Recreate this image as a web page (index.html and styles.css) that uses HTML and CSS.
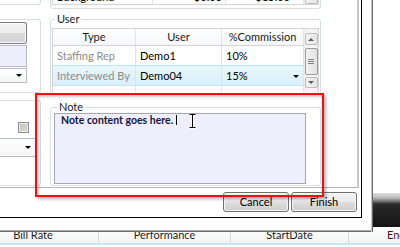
FILE: index.html
```html
<!DOCTYPE html>
<html>
<head>
<meta charset="utf-8">
<link rel="stylesheet" href="styles.css">
</head>
<body>
<div class="screen">
  <div class="app">
    <div class="app-space"></div>
    <div class="app-toolbar"></div>
    <div class="app-header">
      <div class="hcol h1">Bill Rate</div>
      <div class="hcol h2">Performance</div>
      <div class="hcol h3">StartDate</div>
      <div class="hcol h4">EndDate</div>
    </div>
  </div>

  <div class="dialog">
    <div class="client">
      <div class="panel">
        <div class="col-left">
          <fieldset class="grp grp-a"></fieldset>
          <fieldset class="grp grp-b">
            <div class="vbtn"></div>
            <div class="lav-box"></div>
            <div class="combo"><span class="arrow"></span></div>
          </fieldset>
          <fieldset class="grp grp-c">
            <div class="chk-row"><span class="chk"></span></div>
            <div class="combo combo-2"><span class="arrow"></span></div>
          </fieldset>
        </div>
        <div class="col-right">
          <fieldset class="grp grp-bg">
            <div class="grid grid-bg">
              <div class="cells">
                <div class="row bg-row">
                  <div class="c b1">Background</div>
                  <div class="c b2 num">$0.00</div>
                  <div class="c b3 num">$15.00</div>
                </div>
              </div>
              <div class="vscroll vscroll-bg"><div class="sb-btn"><span class="tri-down"></span></div></div>
            </div>
          </fieldset>
          <fieldset class="grp grp-user">
            <legend>User</legend>
            <div class="grid grid-user">
              <div class="cells">
                <div class="row head">
                  <div class="c c1">Type</div>
                  <div class="c c2">User</div>
                  <div class="c c3">%Commission</div>
                </div>
                <div class="row">
                  <div class="c c1 ro">Staffing Rep</div>
                  <div class="c c2">Demo1</div>
                  <div class="c c3">10%</div>
                </div>
                <div class="row sel">
                  <div class="c c1 ro">Interviewed By</div>
                  <div class="c c2">Demo04</div>
                  <div class="c c3 dd-cell">15%<span class="dd"></span></div>
                </div>
                <div class="row">
                  <div class="c c1"></div>
                  <div class="c c2"></div>
                  <div class="c c3"></div>
                </div>
              </div>
              <div class="vscroll">
                <div class="sb-btn up"><span class="tri-up"></span></div>
                <div class="sb-thumb"><span class="grip"></span></div>
                <div class="sb-btn down"><span class="tri-down"></span></div>
              </div>
            </div>
          </fieldset>
          <fieldset class="grp grp-note">
            <legend>Note</legend>
            <div class="note-box">Note content goes here.<span class="caret"></span></div>
          </fieldset>
        </div>
      </div>
      <div class="buttons">
        <button class="btn">Cancel</button>
        <button class="btn">Finish</button>
      </div>
    </div>
  </div>

  <div class="annot"></div>
  <svg class="ibeam" width="7" height="15" viewBox="0 0 7 15">
    <path d="M0.5 0.5H6.5M3.5 0.5V13.5M0.5 13.5H6.5" stroke="#fff" stroke-width="3" fill="none"/>
    <path d="M0.5 0.5H6.5M3.5 0.5V13.5M0.5 13.5H6.5" stroke="#000" stroke-width="1" fill="none"/>
  </svg>
</div>
</body>
</html>
```

FILE: styles.css
```css
* { box-sizing: border-box; }
html, body { margin: 0; padding: 0; }
body {
  width: 400px; height: 247px; overflow: hidden; background: #fff;
  font-family: Lato, "Noto Sans", sans-serif; font-size: 11px; color: #000;
}
.screen { position: relative; width: 400px; height: 247px; overflow: hidden; }

/* background application */
.app { display: flex; flex-direction: column; height: 247px; }
.app-space { height: 193px; flex: none; }
.app-toolbar {
  height: 34px; flex: none;
  background: linear-gradient(#dcdcdc 0, #c4c4c4 4px, #7a7a7a 8px, #2a2a2a 11px, #141414 100%);
}
.app-header {
  display: flex; height: 18px; flex: none; margin-left: -32px;
  background: linear-gradient(#ffffff, #f3f4f5);
  border-bottom: 2px solid #c9e6f5;
}
.hcol { flex: none; line-height: 16px; text-align: center; color: #1c1c1c; border-right: 1px solid #dadada; white-space: nowrap; overflow: hidden; }
.h1 { width: 131px; }
.h2 { width: 132px; }
.h3 { width: 118px; }
.h4 { width: 90px; text-align: left; padding-left: 38px; color: #4a1414; border-right: none; }

/* dialog window */
.dialog {
  position: absolute; left: -20px; top: -40px; width: 393px; height: 272px;
  background: #fff; padding: 0 11px 14px 0;
  box-shadow: inset -1px 0 0 #6a6a6a, inset -2px 0 0 #c4c4c4, inset 0 -1px 0 #707070, inset 0 -2px 0 #a8a8a8;
}
.client {
  height: 100%; display: flex; flex-direction: column;
  border-right: 1px solid #000; border-bottom: 1px solid #000;
  padding: 0 2px 5px 0;
}
.panel {
  height: 228px; flex: none; display: flex; gap: 9px; padding-right: 36px;
  border-right: 2px solid #c6c6c6; border-bottom: 1px solid #b4b4b4;
}
.buttons { display: flex; justify-content: flex-end; gap: 2px; margin-top: 4px; padding-right: 2px; }
.btn {
  width: 66px; height: 20px; padding: 0; margin: 0;
  border: 1px solid #707070; border-radius: 3px;
  background: linear-gradient(#f2f2f2 0%, #ebebeb 50%, #dddddd 50%, #cfcfcf 100%);
  box-shadow: inset 0 0 0 1px #f8f8f8;
  font-family: Lato, "Noto Sans", sans-serif; font-size: 11px; color: #000; line-height: 16px;
}

/* group boxes */
.grp { margin: 0; padding: 0; min-width: 0; border: 1px solid #d5dfe5; border-radius: 3px; }
.grp legend { padding: 0 2px; margin-left: 3px; line-height: 12px; font-size: 11px; color: #1a1a1a; }

.col-left { width: 61px; flex: none; }
.grp-a { height: 45px; }
.grp-b { height: 74px; margin-top: 14px; padding: 2px 13px 0 0; }
.grp-c { height: 86px; margin-top: 7px; padding: 21px 4px 0 0; }

.vbtn {
  height: 22px; border: 1px solid #7a7a7a; border-left: none; border-radius: 0 3px 3px 0;
  background: linear-gradient(#f4f4f4 0%, #ececec 50%, #dedede 50%, #d2d2d2 100%);
  box-shadow: inset 0 0 0 1px #fbfbfb;
}
.lav-box { height: 22px; margin-top: 1px; background: #eeedfb; border: 1px solid #b8b8c8; border-left: none; }
.combo {
  height: 15px; margin-top: 1px; display: flex; justify-content: flex-end; align-items: center;
  padding-right: 4px; background: linear-gradient(#ffffff, #f4f5f6);
  border: 1px solid #b4bcc4; border-left: none;
}
.combo-2 { height: 19px; margin-top: 5px; padding-right: 4px; }
.arrow { width: 0; height: 0; border-left: 3px solid transparent; border-right: 3px solid transparent; border-top: 3px solid #000; }
.chk-row { display: flex; justify-content: flex-end; padding-right: 7px; }
.chk {
  width: 11px; height: 11px; border: 1px solid #8e8f8f;
  background: linear-gradient(135deg, #c3c3bc, #dcdcd6);
  box-shadow: inset 0 0 0 1px #e8e8e4;
}

.col-right { width: 271px; flex: none; }
.grp-bg { height: 49px; padding: 0 1px 3px 1px; }
.grp-user { margin-top: 4px; padding: 3px 1px 1px 1px; }
.grp-note { margin-top: 7px; padding: 0 14px 1px 3px; }

/* grids */
.grid { display: flex; border: 1px solid #d3d3d3; overflow: hidden; background: #fff; }
.grid-user { height: 64px; border-bottom: none; }
.grid-bg { height: 44px; border-top: none; align-items: stretch; }
.cells { width: 251px; flex: none; display: flex; flex-direction: column; }
.grid-bg .cells { justify-content: flex-end; }
.row { display: flex; height: 20px; border-bottom: 1px solid #e6e6e6; flex: none; }
.row .c { border-right: 1px solid #e2e2e2; padding-left: 4px; line-height: 19px; white-space: nowrap; overflow: hidden; }
.c1 { width: 83px; }
.c2 { width: 86px; padding-left: 5px; }
.c3 { width: 82px; }
.ro { color: #8c8c8c; }
.head { height: 17px; background: linear-gradient(#ffffff, #f4f6f7); border-bottom: 1px solid #d5d5d5; }
.head .c { text-align: center; padding-left: 0; line-height: 16px; color: #1a1a1a; border-right-color: #e4e4e4; }
.sel { background: linear-gradient(#eaf6fd, #d9f0fc); border-top: 1px solid #c3e4f6; border-bottom-color: #c3e4f6; margin-top: -1px; height: 21px; }
.dd-cell { display: flex; justify-content: space-between; align-items: center; padding-right: 4px; }
.dd { width: 0; height: 0; border-left: 3px solid transparent; border-right: 3px solid transparent; border-top: 3px solid #000; margin-top: 1px; }

.bg-row { height: 17px; border-bottom: none; }
.bg-row .c { line-height: 14px; padding-top: 3px; }
.b1 { width: 100px; }
.b2 { width: 73px; }
.b3 { width: 78px; }
.num { text-align: right; padding-right: 3px; }
.b3.num { padding-right: 13px; }

/* scrollbars */
.vscroll {
  width: 14px; flex: none; display: flex; flex-direction: column; align-items: center;
  background: linear-gradient(90deg, #eeeeee, #f7f7f7 50%, #eeeeee);
  padding-top: 4px;
}
.vscroll-bg { justify-content: flex-end; padding-top: 0; padding-bottom: 0; }
.sb-btn {
  width: 13px; height: 12px; border: 1px solid #bcbcbc; border-radius: 2px;
  background: linear-gradient(90deg, #f3f3f3, #e6e6e6);
  display: flex; align-items: center; justify-content: center; flex: none;
}
.sb-btn.down { height: 11px; margin-top: 2px; }
.sb-thumb {
  width: 13px; height: 27px; margin-top: 3px; border: 1px solid #9c9c9c; border-radius: 2px;
  background: linear-gradient(90deg, #f2f2f2, #e2e2e2);
  display: flex; align-items: center; justify-content: center; flex: none;
}
.grip { width: 6px; height: 5px; background: repeating-linear-gradient(#808080 0 1px, transparent 1px 2px); }
.tri-up { width: 0; height: 0; border-left: 3px solid transparent; border-right: 3px solid transparent; border-bottom: 3px solid #5a5a5a; }
.tri-down { width: 0; height: 0; border-left: 3px solid transparent; border-right: 3px solid transparent; border-top: 3px solid #5a5a5a; }

/* note */
.note-box {
  height: 71px; background: #efeefc; border: 1px solid #a6a6b6;
  padding: 0 6px; line-height: 13px; color: #14143a;
  font-size: 10.5px; font-weight: 700;
}
.caret { display: inline-block; width: 1px; height: 10px; background: #000; margin-left: 3px; vertical-align: -1px; }

/* overlays */
.annot {
  position: absolute; left: 35px; top: 93px; width: 289px; height: 104px;
  border: 2px solid #f01010;
  box-shadow: 2px 2px 3px rgba(0,0,0,0.3), inset 2px 2px 3px rgba(0,0,0,0.22);
}
.ibeam { position: absolute; left: 189px; top: 114px; }
```
